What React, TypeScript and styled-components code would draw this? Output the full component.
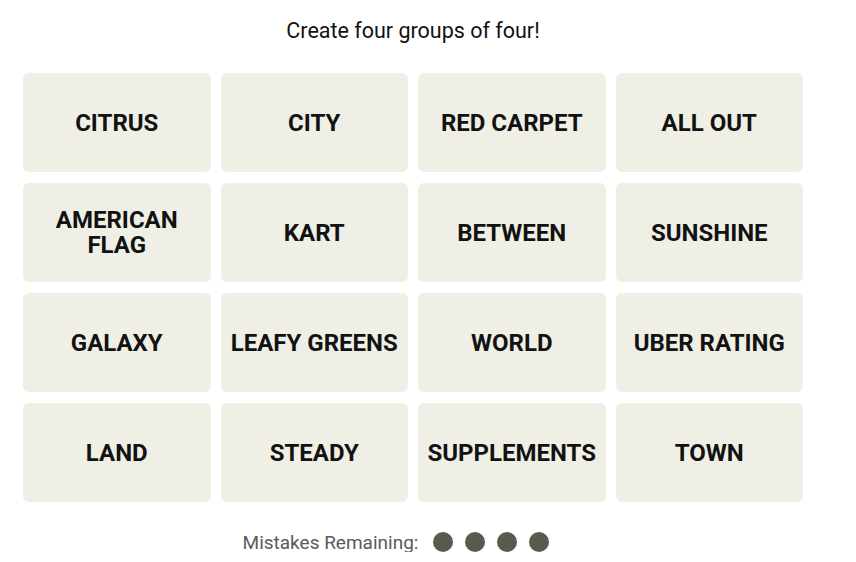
import React from "react";
import styled, { createGlobalStyle } from "styled-components";

const GlobalStyle = createGlobalStyle`
  body {
    margin: 0;
    background: #ffffff;
    font-family: Roboto, "Liberation Sans", sans-serif;
    color: #121212;
  }
`;

const Page = styled.div`
  width: 780px;
  margin-left: 23px;
  padding-top: 19px;
  display: flex;
  flex-direction: column;
  align-items: center;
`;

const Title = styled.p`
  margin: 0;
  font-size: 21.5px;
  line-height: 24px;
  font-weight: 400;
  color: #121212;
`;

const Board = styled.div`
  margin-top: 30px;
  width: 100%;
  display: grid;
  grid-template-columns: repeat(4, 1fr);
  grid-auto-rows: 99px;
  column-gap: 10px;
  row-gap: 11px;
`;

const Tile = styled.button`
  border: none;
  border-radius: 6px;
  background: #efefe6;
  color: #121212;
  font-family: Roboto, "Liberation Sans", sans-serif;
  font-weight: 700;
  font-size: 24px;
  line-height: 25px;
  text-transform: uppercase;
  display: flex;
  align-items: center;
  justify-content: center;
  text-align: center;
  padding: 1px 4px 0;
`;

const Footer = styled.div`
  margin-top: 30px;
  display: flex;
  align-items: center;
  gap: 15px;
  height: 20px;
`;

const MistakesLabel = styled.span`
  font-size: 19px;
  color: #5a5a5a;
`;

const Dots = styled.div`
  display: flex;
  gap: 12px;
  padding-right: 34px;
`;

const Dot = styled.span`
  width: 20px;
  height: 20px;
  border-radius: 50%;
  background: #5a594e;
`;

const words = [
  "Citrus",
  "City",
  "Red Carpet",
  "All Out",
  "American Flag",
  "Kart",
  "Between",
  "Sunshine",
  "Galaxy",
  "Leafy Greens",
  "World",
  "Uber Rating",
  "Land",
  "Steady",
  "Supplements",
  "Town",
];

const App = () => {
  return (
    <>
      <GlobalStyle />
      <Page>
        <Title>Create four groups of four!</Title>
        <Board>
          {words.map((w) =>
            w === "American Flag" ? (
              <Tile key={w}>
                American
                <br />
                Flag
              </Tile>
            ) : (
              <Tile key={w}>{w}</Tile>
            )
          )}
        </Board>
        <Footer>
          <MistakesLabel>Mistakes Remaining:</MistakesLabel>
          <Dots>
            {[0, 1, 2, 3].map((i) => (
              <Dot key={i} />
            ))}
          </Dots>
        </Footer>
      </Page>
    </>
  );
};

export default App;
